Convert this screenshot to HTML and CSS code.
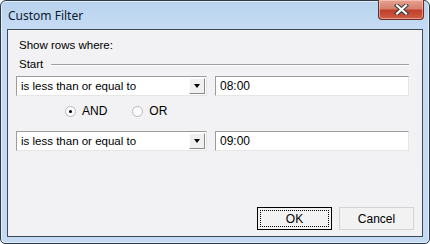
FILE: index.html
```html
<!DOCTYPE html>
<html lang="en">
<head>
    <meta charset="UTF-8">
    <title>Custom Filter</title>
    <link rel="stylesheet" href="styles.css">
</head>
<body>

    <div class="window">
        <div class="titlebar">
            <span class="title">Custom Filter</span>
            <button class="close" aria-label="Close">
                <svg width="15" height="11" viewBox="0 0 15 11">
                    <path d="M3 1.5 L12 9.5 M12 1.5 L3 9.5" stroke="#3b3b3b" stroke-width="4.2" stroke-linecap="square"/>
                    <path d="M3 1.5 L12 9.5 M12 1.5 L3 9.5" stroke="#ffffff" stroke-width="2.2" stroke-linecap="square"/>
                </svg>
            </button>
        </div>

        <div class="client">
            <div class="caption">Show rows where:</div>

            <div class="group">
                <span>Start</span>
                <span class="rule"></span>
            </div>

            <div class="row">
                <div class="combo">
                    <span>is less than or equal to</span>
                    <span class="drop"></span>
                </div>
                <div class="field">08:00</div>
            </div>

            <div class="radios">
                <label class="radio"><span class="dot checked"></span>AND</label>
                <label class="radio"><span class="dot"></span>OR</label>
            </div>

            <div class="row">
                <div class="combo">
                    <span>is less than or equal to</span>
                    <span class="drop"></span>
                </div>
                <div class="field">09:00</div>
            </div>

            <div class="buttons">
                <button class="btn default"><span>OK</span></button>
                <button class="btn">Cancel</button>
            </div>
        </div>
    </div>

</body>
</html>
```

FILE: styles.css
```css
body {
    margin: 0;
    font-family: "Liberation Sans", Arial, sans-serif;
    font-size: 11px;
    color: #000;
    background: #fff;
}
.window {
    width: 430px;
    height: 244px;
    box-sizing: border-box;
    border: 1px solid #2d3a48;
    border-radius: 6px 6px 5px 5px;
    padding: 0 6px 6px;
    display: flex;
    flex-direction: column;
    background: linear-gradient(to bottom, #b9d3ee 0px, #c6dcf3 30px, #c3daf2 100%);
    box-shadow: inset 0 0 0 1px #e4eef9;
}
.titlebar {
    height: 28px;
    display: flex;
    align-items: flex-start;
    position: relative;
}
.title {
    font-family: "Noto Sans", "Open Sans", sans-serif;
    font-size: 12px;
    color: #0a1a2e;
    margin: 6px 0 0 1px;
}
.close {
    position: absolute;
    right: -1px;
    top: -1px;
    width: 46px;
    height: 20px;
    padding: 0;
    border: 1px solid #6b2d25;
    border-top: none;
    border-radius: 0 0 4px 4px;
    background: linear-gradient(to bottom, #e6a292 0%, #d6806e 45%, #c03f2c 55%, #cf5e46 100%);
    box-shadow: inset 0 0 0 1px rgba(255, 220, 210, 0.5);
    display: flex;
    align-items: center;
    justify-content: center;
}
.client {
    flex: 1;
    border: 1px solid #3c4a5a;
    background: #f2f1f4;
    padding: 9px 13px 6px 8px;
    display: flex;
    flex-direction: column;
}
.caption {
    margin-left: 3px;
    line-height: 13px;
    font-size: 11.5px;
}
.group {
    margin: 6px 0 0 3px;
    line-height: 13px;
    font-size: 11.5px;
    display: flex;
    align-items: center;
}
.rule {
    flex: 1;
    height: 1px;
    margin: 1px 0 0 8px;
    background: #a0a0a0;
    border-bottom: 1px solid #fff;
}
.row {
    margin-top: 5px;
    display: flex;
    gap: 8px;
    height: 20px;
}
.combo, .field {
    box-sizing: border-box;
    height: 20px;
    background: #fff;
    border-top: 1px solid #9c9c9c;
    border-left: 1px solid #9c9c9c;
    border-right: 1px solid #e6e6e6;
    border-bottom: 1px solid #e6e6e6;
    display: flex;
    align-items: center;
}
.combo {
    width: 191px;
    padding: 0 1px 0 4px;
    justify-content: space-between;
    font-size: 11.5px;
}
.field {
    width: 194px;
    padding-left: 4px;
    font-size: 12px;
}
.drop {
    width: 16px;
    height: 16px;
    box-sizing: border-box;
    background: #f0f0f0;
    border-top: 1px solid #fff;
    border-left: 1px solid #fff;
    border-right: 1px solid #8a8a8a;
    border-bottom: 1px solid #8a8a8a;
    position: relative;
}
.drop::after {
    content: "";
    position: absolute;
    left: 3.5px;
    top: 5px;
    border-left: 3.5px solid transparent;
    border-right: 3.5px solid transparent;
    border-top: 4px solid #000;
}
.radios {
    height: 30px;
    display: flex;
    align-items: center;
    gap: 25px;
    padding-left: 49px;
    font-size: 12px;
}
.radio {
    display: flex;
    align-items: center;
    gap: 6px;
}
.dot {
    width: 11px;
    height: 11px;
    box-sizing: border-box;
    border-radius: 50%;
    border: 1px solid #b8b8b8;
    background: #fbfbfb;
    position: relative;
}
.dot.checked::after {
    content: "";
    position: absolute;
    left: 3px;
    top: 3px;
    width: 3px;
    height: 3px;
    border-radius: 50%;
    background: #000;
}
.buttons {
    margin-top: auto;
    display: flex;
    justify-content: flex-end;
    gap: 7px;
    margin-right: -5px;
}
.btn {
    width: 75px;
    height: 23px;
    font-family: "Liberation Sans", Arial, sans-serif;
    font-size: 12px;
    color: #000;
    background: #f2f2f2;
    border: 1px solid #d4d4d4;
    padding: 0;
}
.btn.default {
    border: 1px solid #000;
    padding: 2px;
}
.btn.default span {
    display: flex;
    height: 100%;
    align-items: center;
    justify-content: center;
    box-sizing: border-box;
    border: 1px dotted #000;
}
```
